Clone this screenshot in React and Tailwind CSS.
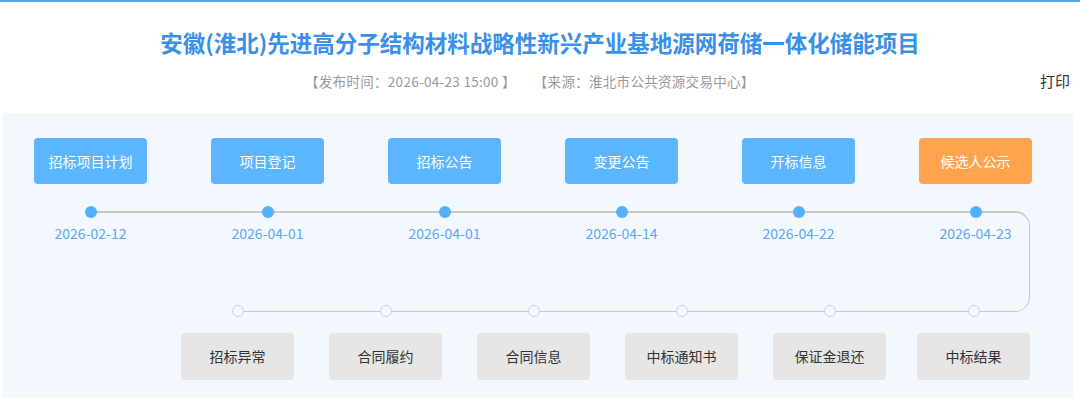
const topSteps = [
  { name: "招标项目计划", date: "2026-02-12" },
  { name: "项目登记", date: "2026-04-01" },
  { name: "招标公告", date: "2026-04-01" },
  { name: "变更公告", date: "2026-04-14" },
  { name: "开标信息", date: "2026-04-22" },
  { name: "候选人公示", date: "2026-04-23", current: true },
];

const bottomSteps = ["招标异常", "合同履约", "合同信息", "中标通知书", "保证金退还", "中标结果"];

const font = { fontFamily: '"Microsoft YaHei", "Noto Sans CJK SC", "Noto Sans", sans-serif' };

export default function App() {
  return (
    <div className="w-[1080px] h-[399px] overflow-hidden bg-white border-t-2 border-[#5aa8f0]" style={font}>
      <h1 className="mt-[25px] text-center text-[22.5px] leading-[30px] font-bold text-[#3a8fe8]">
        安徽(淮北)先进高分子结构材料战略性新兴产业基地源网荷储一体化储能项目
      </h1>
      <div className="mt-[14px] flex items-center pl-[305px] pr-[10px] h-[20px]">
        <span className="text-[13.5px] tracking-[0.3px] text-[#999999]">【发布时间：2026-04-23 15:00 】</span>
        <span className="ml-[18px] text-[13.5px] tracking-[0.3px] text-[#999999]">【来源：淮北市公共资源交易中心】</span>
        <span className="ml-auto text-[15px] text-[#333333]">打印</span>
      </div>

      <div className="relative mt-[22px] ml-[2px] w-[1071px] h-[285px] bg-[#f3f8ff] pt-[25px]">
        {/* connector lines */}
        <div className="absolute left-[88px] top-[98px] w-[160px] h-[2px] bg-[#c4c4c4]" />
        <div className="absolute left-[236px] top-[98px] w-[792px] h-[101px] border-t-2 border-r border-b border-[#c8c8c8] rounded-r-[15px]" />

        <div className="relative flex gap-[64px] pl-[32px]">
          {topSteps.map((s) => (
            <div key={s.name} className="w-[113px] flex flex-col items-center">
              <div
                className={`w-[113px] h-[46px] rounded-[4px] flex items-center justify-center text-[14px] text-white ${
                  s.current ? "bg-[#ffa34d]" : "bg-[#5bb5ff]"
                }`}
              >
                {s.name}
              </div>
              <div className="mt-[22px] w-[12px] h-[12px] rounded-full bg-[#52b0ff]" />
              <div className="mt-[5px] text-[14px] leading-[20px] text-[#5aa8f0]">{s.date}</div>
            </div>
          ))}
        </div>

        <div className="relative flex gap-[35px] pl-[179px] mt-[62px]">
          {bottomSteps.map((name, i) => (
            <div key={name} className={`w-[113px] flex flex-col items-center ${i === 5 ? "-ml-[4px]" : ""}`}>
              <div className="w-[12px] h-[12px] rounded-full border-[1.5px] border-[#cfd4db] bg-[#f3f8ff]" />
              <div className="mt-[16px] w-[113px] h-[47px] rounded-[4px] bg-[#e6e6e6] flex items-center justify-center text-[14px] text-[#333333]">
                {name}
              </div>
            </div>
          ))}
        </div>
      </div>
    </div>
  );
}
